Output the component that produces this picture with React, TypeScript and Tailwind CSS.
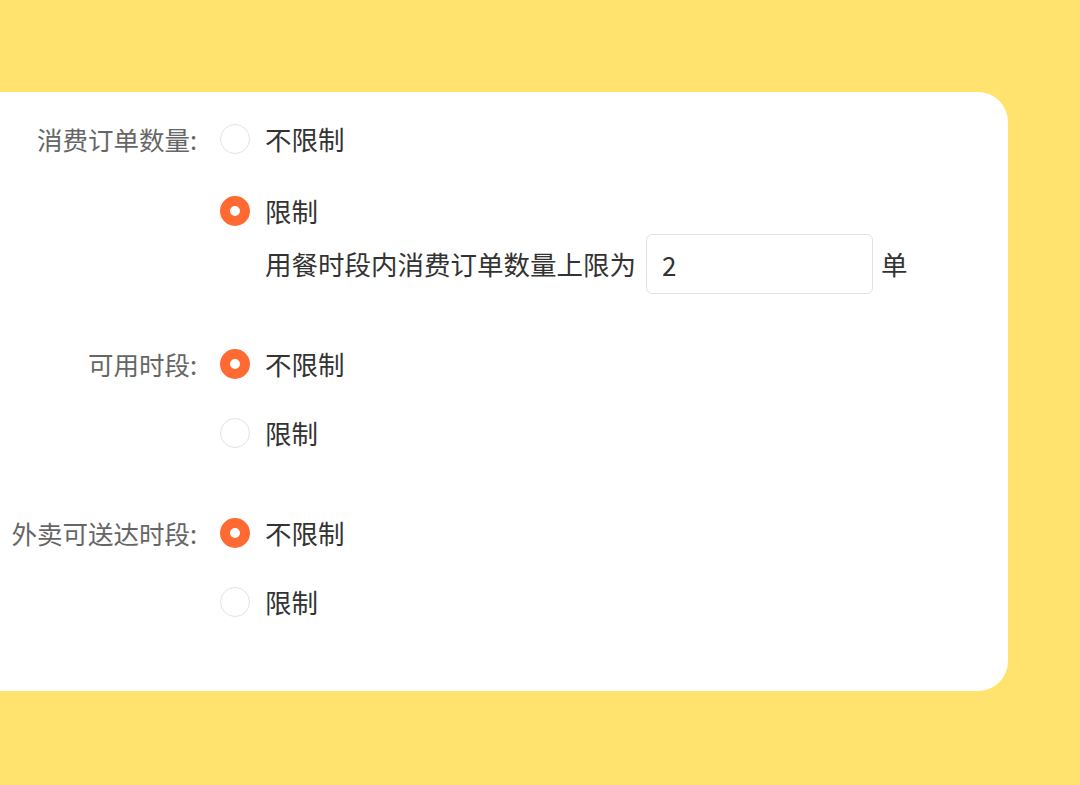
import React, { useState } from 'react'

const FONT = { fontFamily: '"Noto Sans CJK SC", "Noto Sans", sans-serif' }

function Radio({ checked }: { checked: boolean }) {
  return checked ? (
    <span className="box-border block h-[30px] w-[30px] shrink-0 rounded-full border-[10px] border-[#ff6a33] bg-white" />
  ) : (
    <span className="box-border block h-[30px] w-[30px] shrink-0 rounded-full border border-[#e3e3e3] bg-white" />
  )
}

function Option({ checked, label, onClick }: { checked: boolean; label: string; onClick: () => void }) {
  return (
    <button type="button" onClick={onClick} className="flex h-[30px] items-center gap-[15px] text-[26.5px] leading-none text-[#333]">
      <Radio checked={checked} />
      <span>{label}</span>
    </button>
  )
}

export default function App() {
  const [order, setOrder] = useState<'none' | 'limit'>('limit')
  const [usable, setUsable] = useState<'none' | 'limit'>('none')
  const [delivery, setDelivery] = useState<'none' | 'limit'>('none')
  const [max, setMax] = useState('2')

  return (
    <div className="h-[785px] w-[1080px] overflow-hidden bg-[#ffe36e] pt-[92px]" style={FONT}>
      <div className="ml-[-40px] h-[599px] w-[1048px] rounded-[30px] bg-white pl-[40px] pt-[32px]">
        {/* 消费订单数量 */}
        <div className="flex">
          <div className="flex h-[30px] w-[200px] items-center justify-end pr-[3px] text-[25.5px] leading-none text-[#666]">消费订单数量:</div>
          <div className="ml-[20px] flex flex-col">
            <Option checked={order === 'none'} label="不限制" onClick={() => setOrder('none')} />
            <div className="mt-[42px]">
              <Option checked={order === 'limit'} label="限制" onClick={() => setOrder('limit')} />
            </div>
            <div className="mt-[8px] flex items-center pl-[45px] text-[26.5px] leading-none text-[#333]">
              <span>用餐时段内消费订单数量上限为</span>
              <input
                value={max}
                onChange={(e) => setMax(e.target.value)}
                className="ml-[10px] h-[60px] w-[227px] rounded-[6px] border border-[#e3e3e3] px-[15px] text-[26px] text-[#333] outline-none"
              />
              <span className="ml-[8px]">单</span>
            </div>
          </div>
        </div>

        {/* 可用时段 */}
        <div className="mt-[55px] flex">
          <div className="flex h-[30px] w-[200px] items-center justify-end pr-[3px] text-[25.5px] leading-none text-[#666]">可用时段:</div>
          <div className="ml-[20px] flex flex-col gap-[39px]">
            <Option checked={usable === 'none'} label="不限制" onClick={() => setUsable('none')} />
            <Option checked={usable === 'limit'} label="限制" onClick={() => setUsable('limit')} />
          </div>
        </div>

        {/* 外卖可送达时段 */}
        <div className="mt-[70px] flex">
          <div className="flex h-[30px] w-[200px] items-center justify-end pr-[3px] text-[25.5px] leading-none text-[#666]">外卖可送达时段:</div>
          <div className="ml-[20px] flex flex-col gap-[39px]">
            <Option checked={delivery === 'none'} label="不限制" onClick={() => setDelivery('none')} />
            <Option checked={delivery === 'limit'} label="限制" onClick={() => setDelivery('limit')} />
          </div>
        </div>
      </div>
    </div>
  )
}
